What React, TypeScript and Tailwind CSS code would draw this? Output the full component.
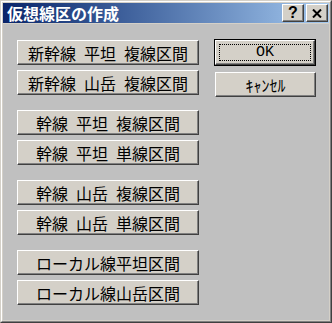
import React from 'react'

const jp = '[font-family:"Noto_Sans_CJK_JP","Noto_Sans",sans-serif]'

const bevel =
  'bg-[#d4d0c8] border border-t-white border-l-white border-r-[#404040] border-b-[#404040] shadow-[inset_-1px_-1px_0_#808080]'

function LineButton({ label }: { label: string }) {
  return (
    <div className={`${bevel} ${jp} flex h-[25px] w-[182px] items-center justify-center text-[16px] leading-none text-black`}>
      {label}
    </div>
  )
}

const groups = [
  ['新幹線\u2002平坦\u2002複線区間', '新幹線\u2002山岳\u2002複線区間'],
  ['幹線\u2002平坦\u2002複線区間', '幹線\u2002平坦\u2002単線区間'],
  ['幹線\u2002山岳\u2002複線区間', '幹線\u2002山岳\u2002単線区間'],
  ['ローカル線平坦区間', 'ローカル線山岳区間'],
]

export default function App() {
  return (
    <div className="h-[323px] w-[332px] border border-t-[#d4d0c8] border-l-[#d4d0c8] border-r-[#404040] border-b-[#404040]">
      <div className="flex h-full w-full flex-col border border-t-white border-l-white border-r-[#808080] border-b-[#808080] bg-[#d4d0c8] p-px">
        {/* title bar */}
        <div className="flex h-[20px] shrink-0 items-center bg-gradient-to-r from-[#0a246a] to-[#a6caf0] pl-[4px] pr-[1px]">
          <span className={`${jp} flex-1 text-[16px] font-bold leading-none text-white`}>仮想線区の作成</span>
          <div className="flex gap-[2px]">
            <div className={`${bevel} flex h-[18px] w-[22px] items-center justify-center font-['Liberation_Sans',sans-serif] text-[16px] font-bold leading-none text-black`}>
              ?
            </div>
            <div className={`${bevel} flex h-[18px] w-[22px] items-center justify-center`}>
              <svg width="10" height="9" viewBox="0 0 10 9">
                <path d="M1 0.5 L9 8.5 M9 0.5 L1 8.5" stroke="black" strokeWidth="2" />
              </svg>
            </div>
          </div>
        </div>

        {/* body */}
        <div className="mt-px flex flex-1 bg-[#c0c0c0]">
          <div className="ml-[14px] mt-[16px] flex flex-col gap-[15px]">
            {groups.map((g, i) => (
              <div key={i} className="flex flex-col gap-[5px]">
                {g.map((l) => (
                  <LineButton key={l} label={l} />
                ))}
              </div>
            ))}
          </div>

          <div className="ml-[15px] mt-[15px] flex flex-col">
            <div className="h-[27px] w-[102px] border border-black">
              <div className={`${bevel} h-full w-full p-[3px]`}>
                <div className="flex h-full w-full items-center justify-center border border-dotted border-black font-['Liberation_Mono',monospace] text-[15px] leading-none text-black">
                  OK
                </div>
              </div>
            </div>
            <div className={`${bevel} ${jp} ml-px mt-[6px] flex h-[25px] w-[101px] items-center justify-center text-[16px] leading-none text-black`}>
              ｷｬﾝｾﾙ
            </div>
          </div>
        </div>
      </div>
    </div>
  )
}
